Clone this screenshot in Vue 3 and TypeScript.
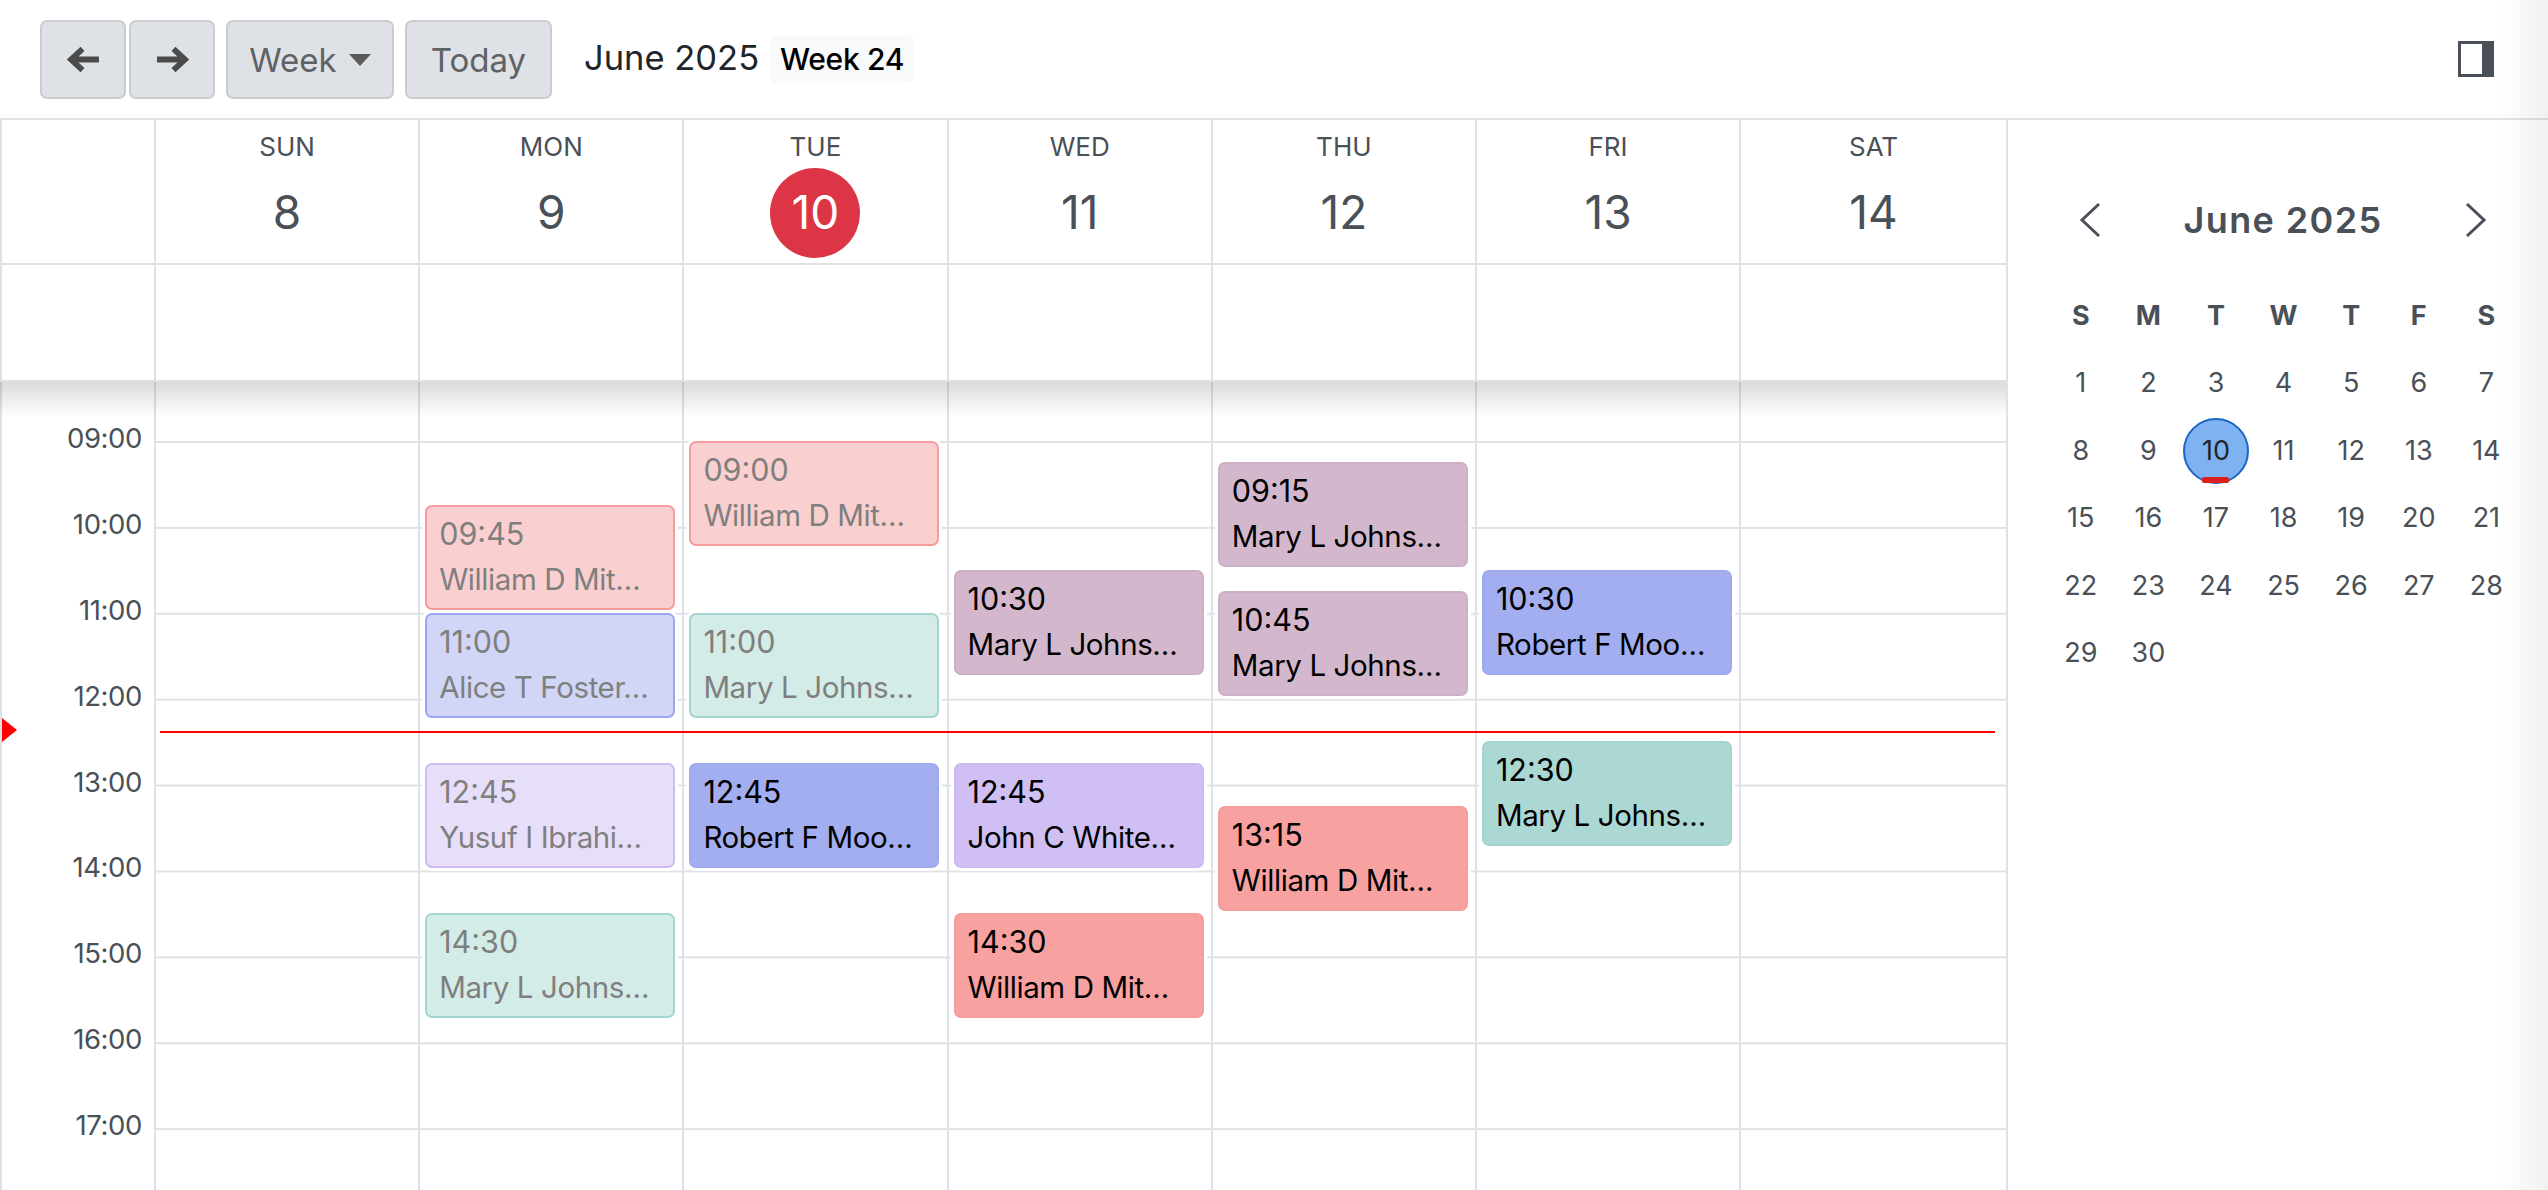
<script setup lang="ts">
interface CalEvent { start: string; name: string; tone: string; past?: boolean }
const HOUR = 85.9
const FIRST = 58.8
const hours = ['09:00','10:00','11:00','12:00','13:00','14:00','15:00','16:00','17:00']
const days = [
  { label: 'SUN', num: 8, events: [] as CalEvent[] },
  { label: 'MON', num: 9, events: [
    { start: '09:45', name: 'William D Mit…', tone: 'red', past: true },
    { start: '11:00', name: 'Alice T Foster…', tone: 'blue', past: true },
    { start: '12:45', name: 'Yusuf I Ibrahi…', tone: 'purple', past: true },
    { start: '14:30', name: 'Mary L Johns…', tone: 'teal', past: true },
  ] },
  { label: 'TUE', num: 10, today: true, events: [
    { start: '09:00', name: 'William D Mit…', tone: 'red', past: true },
    { start: '11:00', name: 'Mary L Johns…', tone: 'teal', past: true },
    { start: '12:45', name: 'Robert F Moo…', tone: 'blue' },
  ] },
  { label: 'WED', num: 11, events: [
    { start: '10:30', name: 'Mary L Johns…', tone: 'mauve' },
    { start: '12:45', name: 'John C White…', tone: 'purple' },
    { start: '14:30', name: 'William D Mit…', tone: 'red' },
  ] },
  { label: 'THU', num: 12, events: [
    { start: '09:15', name: 'Mary L Johns…', tone: 'mauve' },
    { start: '10:45', name: 'Mary L Johns…', tone: 'mauve' },
    { start: '13:15', name: 'William D Mit…', tone: 'red' },
  ] },
  { label: 'FRI', num: 13, events: [
    { start: '10:30', name: 'Robert F Moo…', tone: 'blue' },
    { start: '12:30', name: 'Mary L Johns…', tone: 'teal' },
  ] },
  { label: 'SAT', num: 14, events: [] as CalEvent[] },
]
function topOf(start: string): string {
  const [h, m] = start.split(':').map(Number)
  return `${FIRST + (h + m / 60 - 9) * HOUR}px`
}
const weekLetters = ['S','M','T','W','T','F','S']
const dates: (number | null)[] = [...Array.from({ length: 30 }, (_, i) => i + 1), null, null, null, null, null]
</script>

<template>
  <div class="app">
    <header class="toolbar">
      <div class="arrows">
        <button class="btn btn-icon" aria-label="Previous">
          <svg width="33" height="29" viewBox="0 0 34 30"><path d="M33 15H6M16 4 4 15l12 11" fill="none" stroke="#4b4b4b" stroke-width="6"/></svg>
        </button>
        <button class="btn btn-icon" aria-label="Next">
          <svg width="33" height="29" viewBox="0 0 34 30"><path d="M1 15h27M18 4l12 11-12 11" fill="none" stroke="#4b4b4b" stroke-width="6"/></svg>
        </button>
      </div>
      <button class="btn btn-text btn-week">Week<span class="caret"></span></button>
      <button class="btn btn-text btn-today">Today</button>
      <span class="title">June 2025</span>
      <span class="week-badge">Week 24</span>
      <svg class="panel-icon" width="36" height="36" viewBox="0 0 36 36">
        <path d="M0 0h36v36H0z M3 3v30h21V3z" fill="#495057" fill-rule="evenodd"/>
      </svg>
    </header>

    <div class="body">
      <section class="calendar">
        <div class="row head-row">
          <div class="gutter-cell"></div>
          <div v-for="d in days" :key="d.label" class="head-cell">
            <span class="dow">{{ d.label }}</span>
            <span class="dnum" :class="{ today: d.today }">{{ d.num }}</span>
          </div>
        </div>
        <div class="row allday-row">
          <div class="gutter-cell"></div>
          <div v-for="d in days" :key="d.label" class="allday-cell"></div>
        </div>
        <div class="time-grid">
          <div class="labels">
            <div v-for="h in hours" :key="h" class="hour-label">{{ h }}</div>
          </div>
          <div v-for="d in days" :key="d.label" class="day-col">
            <article
              v-for="e in d.events"
              :key="e.start"
              class="event"
              :class="[e.tone, { past: e.past }]"
              :style="{ top: topOf(e.start) }"
            >
              <div class="ev-time">{{ e.start }}</div>
              <div class="ev-name">{{ e.name }}</div>
            </article>
          </div>
          <div class="top-shadow"></div>
          <div class="now-line"></div>
          <div class="now-marker"></div>
        </div>
      </section>

      <aside class="sidebar">
        <div class="mini-head">
          <svg width="22" height="36" viewBox="0 0 22 36"><path d="M20 2 3 18l17 16" fill="none" stroke="#495057" stroke-width="3"/></svg>
          <span class="mini-title">June 2025</span>
          <svg width="22" height="36" viewBox="0 0 22 36"><path d="M2 2l17 16L2 34" fill="none" stroke="#495057" stroke-width="3"/></svg>
        </div>
        <div class="mini-grid">
          <span v-for="(l, i) in weekLetters" :key="i" class="mini-dow">{{ l }}</span>
          <span v-for="(n, i) in dates" :key="'d' + i" class="mini-date" :class="{ selected: n === 10 }">{{ n }}</span>
        </div>
      </aside>
    </div>
    <div class="edge-fade"></div>
  </div>
</template>

<style>
html, body { margin: 0; background: #fff; }
</style>

<style scoped>
.app {
  position: relative;
  width: 2548px;
  height: 1190px;
  overflow: hidden;
  display: flex;
  flex-direction: column;
  background: #fff;
  font-family: "Inter", "Noto Sans", sans-serif;
  color: #495057;
}
.toolbar {
  height: 120px;
  box-sizing: border-box;
  flex: none;
  display: flex;
  align-items: flex-start;
  padding: 20px 54px 0 40px;
  border-bottom: 2px solid #dee2e6;
}
.arrows { display: flex; gap: 3px; margin-right: 11px; }
.btn {
  height: 79px;
  box-sizing: border-box;
  background: #dee1e6;
  border: 2px solid #cbcccf;
  border-radius: 7px;
  padding: 0;
  font-family: inherit;
  display: flex;
  align-items: center;
  justify-content: center;
}
.btn-icon { width: 86px; }
.btn-text { font-size: 33px; color: #5f6265; }
.btn-week { width: 168px; margin-right: 11px; }
.btn-today { width: 147px; margin-right: 32px; }
.caret {
  width: 0; height: 0;
  margin-left: 12px;
  border-left: 11px solid transparent;
  border-right: 11px solid transparent;
  border-top: 12px solid #5a5a5a;
}
.title { font-size: 34.5px; color: #212529; line-height: 75px; margin-right: 11px; }
.week-badge {
  margin-top: 16px;
  width: 144px;
  height: 47px;
  box-sizing: border-box;
  border-radius: 7px;
  background: #f8f9fa;
  color: #000;
  font-size: 30px;
  font-weight: 500;
  line-height: 47px;
  letter-spacing: -0.3px;
  text-align: center;
}
.panel-icon { margin-left: auto; margin-top: 21px; }

.body { flex: 1; display: flex; min-height: 0; }
.calendar {
  width: 2008px;
  flex: none;
  display: flex;
  flex-direction: column;
  border-right: 2px solid #dee2e6;
  box-sizing: border-box;
}
.row { display: grid; grid-template-columns: 154px repeat(6, 264.2px) 1fr; flex: none; }
.head-row { height: 145px; border-bottom: 2px solid #dee2e6; box-sizing: border-box; }
.allday-row { height: 117px; border-bottom: 2px solid #dee2e6; box-sizing: border-box; }
.gutter-cell { border-left: 2px solid #dee2e6; }
.head-cell {
  border-left: 2px solid #dee2e6;
  display: flex;
  flex-direction: column;
  align-items: center;
  position: relative;
}
.allday-cell { border-left: 2px solid #dee2e6; }
.dow { font-size: 26px; line-height: 32px; margin-top: 11px; }
.dnum {
  margin-top: 5px;
  width: 90px;
  height: 90px;
  border-radius: 50%;
  font-size: 46px;
  line-height: 88px;
  text-align: center;
}
.dnum.today { background: #dc3545; color: #fff; }

.time-grid {
  position: relative;
  flex: 1;
  min-height: 0;
  display: grid;
  grid-template-columns: 154px repeat(6, 264.2px) 1fr;
  overflow: hidden;
}
.labels { border-left: 2px solid #dee2e6; padding-top: 37px; text-align: right; padding-right: 12px; }
.hour-label { height: 85.9px; font-size: 27.5px; line-height: 38px; letter-spacing: -0.4px; }
.day-col {
  position: relative;
  border-left: 2px solid #dee2e6;
  background-image: linear-gradient(#dee2e6 2px, transparent 2px);
  background-size: 100% 85.9px;
  background-position: 0 59px;
}
.event {
  position: absolute;
  left: 5px;
  width: 250px;
  height: 105px;
  box-sizing: border-box;
  padding: 5px 12px;
  border: 2px solid;
  border-radius: 7px;
  box-shadow: 0 0 0 3px #fff;
  color: #000;
  overflow: hidden;
}
.ev-time { font-size: 30.5px; line-height: 45px; margin-top: -1px; }
.ev-name { font-size: 29.5px; line-height: 46px; white-space: nowrap; overflow: hidden; letter-spacing: -0.4px; }
.event.red { background: #f7a1a1; border-color: #f59c9c; }
.event.blue { background: #a3aef0; border-color: #9ea9ee; }
.event.teal { background: #acd8d4; border-color: #a5d3ce; }
.event.purple { background: #d0bff2; border-color: #cbbaf0; }
.event.mauve { background: #d3b8cd; border-color: #ccb0c6; }
.event.past { color: #7f7f7f; }
.event.past.red { background: #facfd0; border-color: #f79b9d; }
.event.past.blue { background: #d1d6f7; border-color: #9aa6ed; }
.event.past.teal { background: #d4ece8; border-color: #a3d5cf; }
.event.past.purple { background: #e7dffa; border-color: #cdbcf1; }

.top-shadow {
  position: absolute;
  left: 0; right: 0; top: 0;
  height: 35px;
  background: linear-gradient(rgba(0, 0, 0, 0.14), rgba(0, 0, 0, 0));
  pointer-events: none;
}
.now-line {
  position: absolute;
  left: 160px;
  width: 1835px;
  top: 349px;
  height: 2px;
  background: #ff0000;
}
.now-marker {
  position: absolute;
  left: 2px;
  top: 336px;
  width: 0; height: 0;
  border-left: 15px solid #ff0000;
  border-top: 12px solid transparent;
  border-bottom: 12px solid transparent;
}

.sidebar { flex: 1; min-width: 0; box-sizing: border-box; padding: 82px 0 0 0; }
.mini-head {
  margin: 0 0 0 71px;
  width: 408px;
  display: flex;
  align-items: center;
  justify-content: space-between;
  height: 36px;
}
.mini-title { font-size: 36px; font-weight: 600; letter-spacing: 1.4px; line-height: 36px; margin-top: -1px; }
.mini-grid {
  margin: 44px 0 0 39px;
  width: 473px;
  display: grid;
  grid-template-columns: repeat(7, 67.6px);
  grid-auto-rows: 67.5px;
  justify-items: center;
  align-items: center;
}
.mini-dow { font-size: 27px; font-weight: 700; }
.mini-date { font-size: 27px; position: relative; width: 66px; height: 66px; line-height: 66px; text-align: center; }
.mini-date.selected {
  box-sizing: border-box;
  background: #7fb2f0;
  border: 2px solid #1d66c4;
  border-radius: 50%;
  line-height: 62px;
  color: #212529;
}
.mini-date.selected::after {
  content: "";
  position: absolute;
  left: 50%;
  bottom: -1px;
  width: 27px;
  height: 6px;
  margin-left: -13.5px;
  border-radius: 2px;
  background: #dc2020;
}
.edge-fade {
  position: absolute;
  right: 0; top: 0; bottom: 0;
  width: 48px;
  background: linear-gradient(to right, rgba(0, 0, 0, 0), rgba(0, 0, 0, 0.055));
  pointer-events: none;
}
</style>
